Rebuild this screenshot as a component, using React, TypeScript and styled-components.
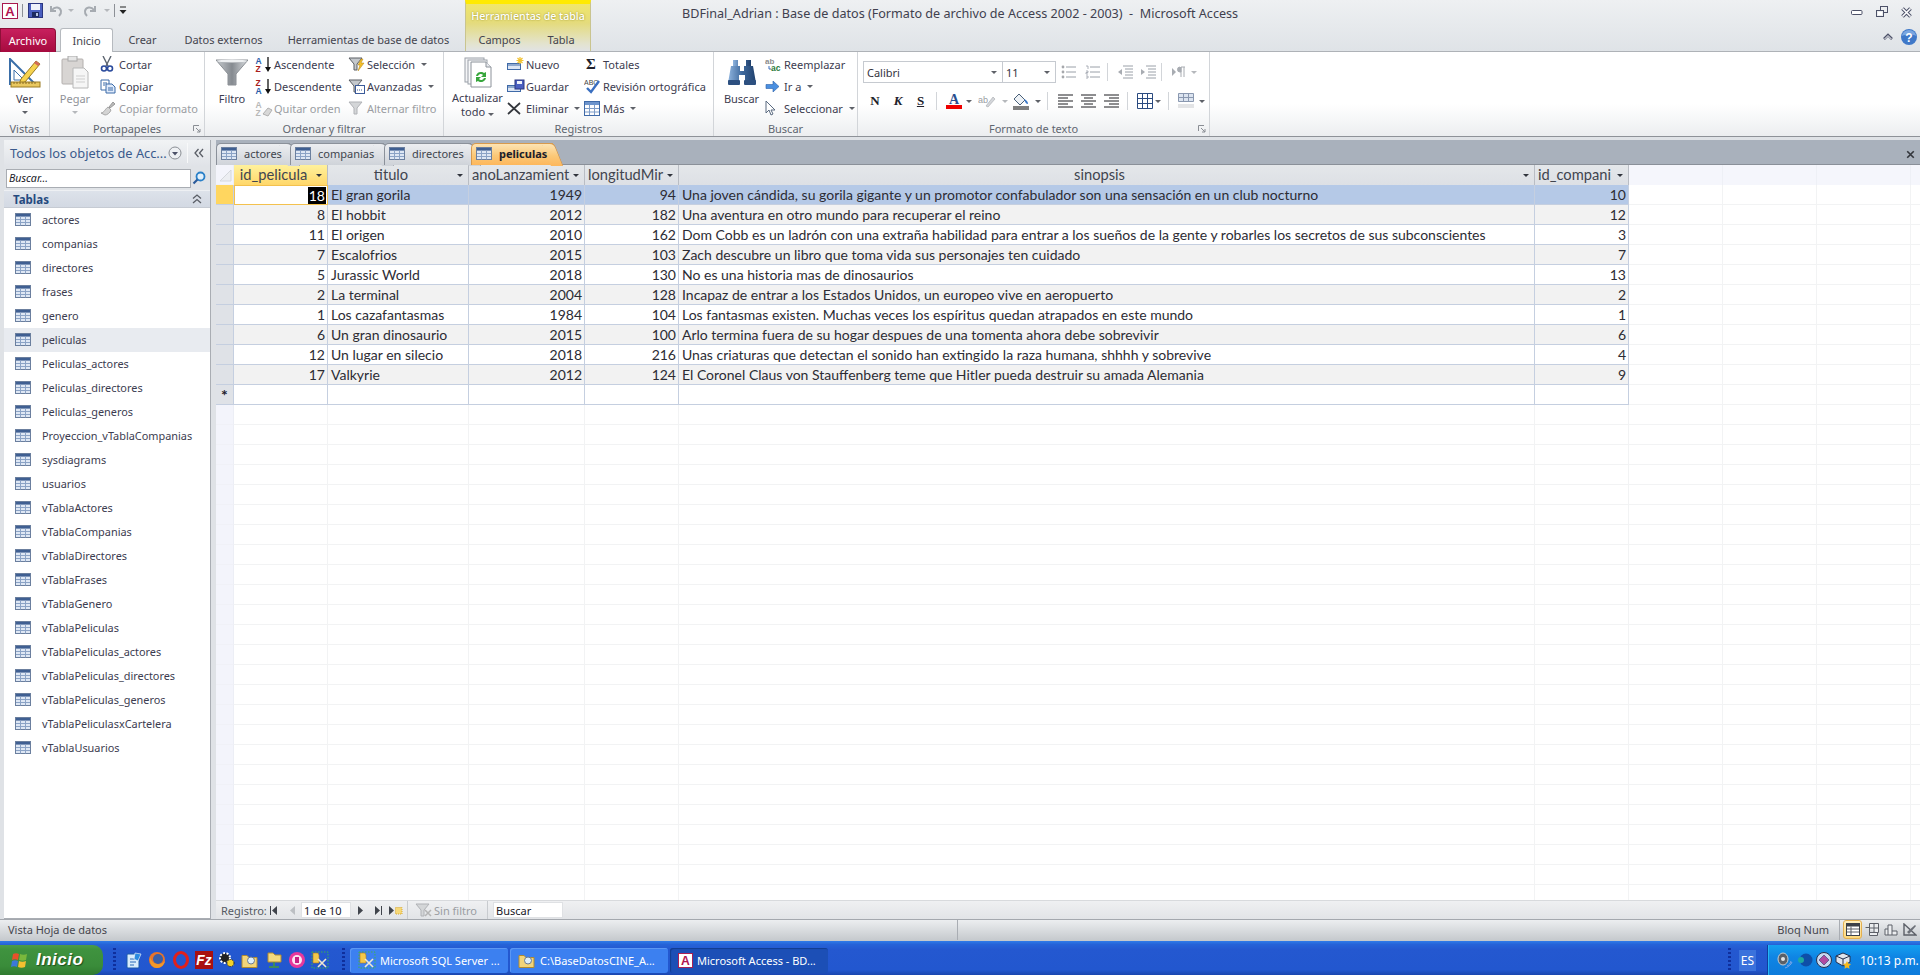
import React, { FC, ReactNode } from "react";
import styled, { createGlobalStyle } from "styled-components";

const UI_FONT = `"Noto Sans", "Open Sans", sans-serif`;
const DATA_FONT = `Lato, "Noto Sans", sans-serif`;

const GlobalStyle = createGlobalStyle`
  html, body {
    margin: 0;
    padding: 0;
    height: 100%;
    overflow: hidden;
  }
  #root {
    height: 100%;
  }
  * {
    box-sizing: border-box;
  }
`;

const Page = styled.div`
  width: 1920px;
  height: 975px;
  display: flex;
  flex-direction: column;
  font-family: ${UI_FONT};
  font-size: 11px;
  color: #3c3c50;
  background: #fff;
  overflow: hidden;
`;

/* ---------- title area ---------- */

const TopArea = styled.div`
  height: 52px;
  display: flex;
  background: linear-gradient(#eef0f2, #dfe3e7);
  border-bottom: 1px solid #aeb2b7;
  flex-shrink: 0;
`;

const TopLeft = styled.div`
  width: 465px;
  display: flex;
  flex-direction: column;
`;

const QatRow = styled.div`
  height: 27px;
  display: flex;
  align-items: center;
  padding: 0 0 5px 2px;
`;

const QatSlot = styled.span<{ $w: number }>`
  width: ${(p) => p.$w}px;
  height: 20px;
  display: flex;
  align-items: center;
  justify-content: center;
`;

const QatSep = styled.span`
  width: 1px;
  height: 13px;
  margin: 0 4px;
  background: #8c9096;
`;

const TabRow = styled.div`
  height: 25px;
  display: flex;
  align-items: flex-end;
`;

const FileTab = styled.div`
  width: 56px;
  height: 24px;
  margin-right: 4px;
  margin-bottom: -1px;
  display: flex;
  align-items: center;
  justify-content: center;
  color: #fff;
  background: linear-gradient(#c8205e, #a50a3e);
  border: 1px solid #8d1038;
  border-bottom: none;
  border-radius: 0 4px 0 0;
`;

const RibbonTab = styled.div<{ $w: number; $active?: boolean }>`
  width: ${(p) => p.$w}px;
  height: ${(p) => (p.$active ? 24 : 23)}px;
  margin-bottom: ${(p) => (p.$active ? -1 : 0)}px;
  display: flex;
  align-items: center;
  justify-content: center;
  color: #44444e;
  background: ${(p) => (p.$active ? "#fff" : "transparent")};
  border: ${(p) => (p.$active ? "1px solid #b6babf" : "none")};
  border-bottom: none;
  border-radius: 3px 3px 0 0;
`;

const ContextColumn = styled.div`
  width: 126px;
  display: flex;
  flex-direction: column;
  background: linear-gradient(#f0e66a 0%, #e4db7c 40%, #e3e3cf 85%, #e1e3e4 100%);
  border-top: 4px solid #ffea00;
  border-left: 1px solid #c9c48f;
  border-right: 1px solid #c9c48f;
`;

const ContextLabel = styled.div`
  height: 23px;
  display: flex;
  align-items: center;
  justify-content: center;
  padding-top: 2px;
  color: #fff;
  font-size: 10.6px;
  font-weight: 500;
  text-shadow: 0 0 2px #8f8720;
  white-space: nowrap;
`;

const TopRight = styled.div`
  flex: 1;
  display: flex;
  flex-direction: column;
`;

const TitleRow = styled.div`
  height: 27px;
  display: flex;
  align-items: center;
  padding: 1px 8px 0 91px;
  color: #40404e;
  font-size: 12.6px;
  white-space: pre;
`;

const TitleText = styled.span`
  flex: 1;
`;

const WindowButtons = styled.div`
  display: flex;
  gap: 13px;
  align-items: center;
  margin-bottom: 3px;
`;

const HelpRow = styled.div`
  height: 25px;
  display: flex;
  align-items: center;
  justify-content: flex-end;
  gap: 8px;
  padding: 0 3px 3px 0;
`;

/* ---------- ribbon ---------- */

const Ribbon = styled.div`
  height: 85px;
  display: flex;
  background: linear-gradient(#fff 0%, #fff 62%, #eceef0 100%);
  border-bottom: 1px solid #8e9298;
  flex-shrink: 0;
`;

const GroupBox = styled.div<{ $w: number }>`
  position: relative;
  width: ${(p) => p.$w}px;
  display: flex;
  flex-direction: column;
  border-right: 1px solid #d2d5d9;
`;

const GroupBody = styled.div<{ $pad: number }>`
  height: 68px;
  display: flex;
  padding-left: ${(p) => p.$pad}px;
  padding-top: 1px;
`;

const GroupLabel = styled.div`
  height: 16px;
  display: flex;
  align-items: center;
  justify-content: center;
  color: #5f6670;
`;

const Launcher = styled.span`
  position: absolute;
  right: 3px;
  bottom: 3px;
  display: flex;
`;

const LargeButton = styled.div<{ $w: number; $off?: boolean }>`
  width: ${(p) => p.$w}px;
  display: flex;
  flex-direction: column;
  align-items: center;
  color: ${(p) => (p.$off ? "#8f9298" : "#3c3c50")};
  line-height: 14px;
  text-align: center;
  white-space: nowrap;
`;

const LargeIcon = styled.div<{ $h?: number }>`
  height: ${(p) => p.$h ?? 39}px;
  display: flex;
  align-items: center;
  justify-content: center;
`;

const Caret = styled.span<{ $off?: boolean }>`
  display: inline-block;
  width: 0;
  height: 0;
  border-left: 3px solid transparent;
  border-right: 3px solid transparent;
  border-top: 3px solid ${(p) => (p.$off ? "#b5b8bc" : "#5e6168")};
`;

const LargeCaret = styled(Caret)`
  margin-top: 5px;
`;

const SmallColumn = styled.div<{ $w?: number }>`
  width: ${(p) => (p.$w ? `${p.$w}px` : "auto")};
  display: flex;
  flex-direction: column;
`;

const SmallButton = styled.div<{ $off?: boolean }>`
  height: 22px;
  display: flex;
  align-items: center;
  color: ${(p) => (p.$off ? "#9a9da2" : "#3c3c50")};
  white-space: nowrap;
`;

const SmallIcon = styled.span`
  width: 19px;
  height: 18px;
  display: flex;
  align-items: center;
  flex-shrink: 0;
`;

const SmallCaret = styled(Caret)`
  margin-left: 6px;
`;

const SigmaGlyph = styled.span`
  padding-left: 2px;
  font-family: "Liberation Serif", serif;
  font-size: 15px;
  font-weight: 700;
  color: #20202a;
`;

const FormatBody = styled.div`
  height: 68px;
  display: flex;
  flex-direction: column;
  padding: 9px 0 0 5px;
`;

const FormatRow = styled.div<{ $gap?: number }>`
  height: 22px;
  display: flex;
  align-items: center;
  margin-bottom: ${(p) => p.$gap ?? 0}px;
`;

const Combo = styled.div<{ $w: number }>`
  width: ${(p) => p.$w}px;
  height: 22px;
  display: flex;
  align-items: center;
  justify-content: space-between;
  padding: 0 5px 0 3px;
  margin-right: -1px;
  background: #fff;
  border: 1px solid #c6cad0;
  color: #33333d;
`;

const FormatSlot = styled.span<{ $w: number }>`
  width: ${(p) => p.$w}px;
  height: 22px;
  display: flex;
  align-items: center;
  justify-content: center;
  flex-shrink: 0;
`;

const BoldLetter = styled.span<{ $italic?: boolean; $under?: boolean }>`
  font-family: "Liberation Serif", serif;
  font-size: 13px;
  font-weight: 700;
  color: #20202a;
  font-style: ${(p) => (p.$italic ? "italic" : "normal")};
  text-decoration: ${(p) => (p.$under ? "underline" : "none")};
`;

const FormatSep = styled.span<{ $l: number; $r: number }>`
  width: 1px;
  height: 18px;
  margin: 0 ${(p) => p.$r}px 0 ${(p) => p.$l}px;
  background: #d2d5d9;
  flex-shrink: 0;
`;

/* ---------- main body ---------- */

const Workspace = styled.div`
  flex: 1;
  min-height: 0;
  display: flex;
  background: #dfe2e6;
  padding-top: 3px;
`;

const NavPane = styled.div`
  width: 206px;
  margin-left: 4px;
  display: flex;
  flex-direction: column;
  background: #fff;
  border-bottom: 1px solid #a9adb3;
`;

const NavHeader = styled.div`
  height: 26px;
  flex-shrink: 0;
  display: flex;
  align-items: center;
  padding: 0 6px;
  background: linear-gradient(#f1f3f5, #e0e3e8);
  color: #3a5a8c;
  font-size: 12.8px;
  white-space: nowrap;
`;

const NavTitle = styled.span`
  flex: 1;
`;

const NavSep = styled.span`
  width: 1px;
  height: 20px;
  margin: 0 6px 0 5px;
  background: #f8f9fa;
`;

const NavSearch = styled.div`
  height: 24px;
  flex-shrink: 0;
  display: flex;
  align-items: center;
  background: #e0e3e7;
  padding: 1px 4px 1px 2px;
`;

const NavInput = styled.div`
  width: 185px;
  height: 19px;
  display: flex;
  align-items: center;
  padding-left: 2px;
  background: #fff;
  border: 1px solid #a9adb3;
  color: #202028;
  font-size: 10.6px;
  font-style: italic;
`;

const NavSearchIcon = styled.span`
  flex: 1;
  display: flex;
  justify-content: center;
`;

const NavGroup = styled.div`
  height: 18px;
  flex-shrink: 0;
  display: flex;
  align-items: center;
  justify-content: space-between;
  padding: 0 8px 0 9px;
  background: linear-gradient(#dde2ea, #d3d9e3);
  border-top: 1px solid #eef0f3;
  border-bottom: 1px solid #c6cbd3;
  color: #254a7f;
  font-size: 11.5px;
  font-weight: 700;
`;

const NavList = styled.div`
  flex: 1;
  display: flex;
  flex-direction: column;
`;

const NavItem = styled.div<{ $active?: boolean }>`
  height: 24px;
  flex-shrink: 0;
  display: flex;
  align-items: center;
  gap: 11px;
  padding: 0 0 1px 11px;
  background: ${(p) => (p.$active ? "#e8ebf0" : "transparent")};
  color: #3c3c50;
  font-size: 10.9px;
  white-space: nowrap;
`;

const Gutter = styled.div`
  width: 6px;
  border-left: 1px solid #a9adb3;
`;

const DocArea = styled.div`
  flex: 1;
  min-width: 0;
  display: flex;
  flex-direction: column;
`;

const DocTabs = styled.div`
  height: 25px;
  display: flex;
  align-items: flex-end;
  background: #a9b1bc;
  border-bottom: 1px solid #8a9099;
  flex-shrink: 0;
`;

const DocTab = styled.div<{ $w: number; $active?: boolean }>`
  position: relative;
  width: ${(p) => p.$w}px;
  height: 22px;
  margin-bottom: -1px;
  display: flex;
  align-items: center;
  gap: 7px;
  padding: 0 0 2px 4px;
  font-size: 11px;
  font-weight: ${(p) => (p.$active ? 700 : 400)};
  color: ${(p) => (p.$active ? "#20202a" : "#41454d")};
  background: ${(p) =>
    p.$active
      ? "linear-gradient(#fde4b4, #fbc877 55%, #fdb75c)"
      : "linear-gradient(#eceef1, #cfd3d9)"};
  border: 1px solid ${(p) => (p.$active ? "#d79a4e" : "#8b919a")};
  border-right: none;
  border-bottom: none;
  border-radius: 5px 0 0 0;
  z-index: ${(p) => (p.$active ? 2 : 1)};

  &::after {
    content: "";
    position: absolute;
    top: -1px;
    right: -6px;
    width: 12px;
    height: 22px;
    background: inherit;
    border: 1px solid ${(p) => (p.$active ? "#d79a4e" : "#8b919a")};
    border-left: none;
    border-bottom: none;
    border-radius: 0 5px 0 0;
    transform: skewX(22deg);
    z-index: -1;
  }
`;

const DocClose = styled.span`
  margin-left: auto;
  margin-right: 5px;
  margin-bottom: 5px;
  display: flex;
`;

const GridBody = styled.div`
  flex: 1;
  min-height: 0;
  display: flex;
  flex-direction: column;
  overflow: hidden;
  background: #fff;
`;

const GridRow = styled.div`
  height: 20px;
  display: flex;
  flex-shrink: 0;
`;

const HeaderCell = styled.div<{ $w: number; $active?: boolean; $blank?: boolean }>`
  position: relative;
  width: ${(p) => p.$w}px;
  flex-shrink: 0;
  display: flex;
  align-items: center;
  justify-content: center;
  padding: 0 14px 2px 0;
  overflow: hidden;
  font-family: ${DATA_FONT};
  font-size: 14.7px;
  color: #41454f;
  white-space: nowrap;
  background: ${(p) =>
    p.$blank
      ? "#f5f6fc"
      : p.$active
        ? "linear-gradient(#fff19c, #ffd76a)"
        : "linear-gradient(#e4e7ea, #dde0e5)"};
  border-right: 1px solid ${(p) => (p.$blank ? "#eef0f6" : "#b9bdc4")};
`;

const HeaderLabel = styled.span<{ $left?: boolean }>`
  flex: ${(p) => (p.$left ? 1 : "none")};
  min-width: 0;
  padding-left: ${(p) => (p.$left ? 3 : 0)}px;
`;

const HeaderCaret = styled(Caret)`
  position: absolute;
  right: 5px;
  top: 9px;
  border-top-color: #30343c;
`;

const Selector = styled.div<{ $state: "blank" | "plain" | "current" }>`
  width: 18px;
  flex-shrink: 0;
  display: flex;
  align-items: center;
  justify-content: center;
  color: #20202a;
  font-family: ${DATA_FONT};
  font-size: 16px;
  font-weight: 700;
  background: ${(p) =>
    p.$state === "current" ? "#ffd65f" : p.$state === "plain" ? "#dfe2e7" : "#f3f4fb"};
  border-bottom: 1px solid ${(p) => (p.$state === "blank" ? "#f0f1f7" : "#c5cfe0")};
  border-right: 1px solid ${(p) => (p.$state === "blank" ? "#eceef5" : "#c5cfe0")};
`;

const Cell = styled.div<{ $w: number; $num?: boolean; $bg: string; $faint?: boolean }>`
  width: ${(p) => p.$w}px;
  flex-shrink: 0;
  display: flex;
  align-items: center;
  justify-content: ${(p) => (p.$num ? "flex-end" : "flex-start")};
  padding: 0 2px 0 3px;
  overflow: hidden;
  font-family: ${DATA_FONT};
  font-size: 14px;
  color: #2c2c34;
  white-space: nowrap;
  background: ${(p) => p.$bg};
  border-right: 1px solid ${(p) => (p.$faint ? "#f2f3f4" : "#c5cfe0")};
  border-bottom: 1px solid ${(p) => (p.$faint ? "#f2f3f4" : "#c5cfe0")};
`;

const CurrentCell = styled(Cell)`
  padding-right: 1px;
  border: 1px solid #f3c14e;
`;

const Inverted = styled.span`
  padding: 0 1px;
  background: #000;
  color: #fff;
`;

const RecordBar = styled.div`
  height: 19px;
  display: flex;
  align-items: center;
  background: linear-gradient(#eff0f2, #e2e4e7);
  border-top: 1px solid #d8dadd;
  color: #555a62;
  flex-shrink: 0;
`;

const RecordLabel = styled.span`
  width: 50px;
  padding-left: 5px;
`;

const RecordGlyph = styled.span<{ $w: number }>`
  width: ${(p) => p.$w}px;
  display: flex;
  justify-content: center;
  flex-shrink: 0;
`;

const RecordInput = styled.div<{ $w: number }>`
  width: ${(p) => p.$w}px;
  height: 16px;
  display: flex;
  align-items: center;
  padding-left: 2px;
  background: #fff;
  border: 1px solid #dfe1e4;
  color: #202028;
  flex-shrink: 0;
`;

const RecordSep = styled.span<{ $l: number; $r: number }>`
  width: 1px;
  height: 19px;
  margin: 0 ${(p) => p.$r}px 0 ${(p) => p.$l}px;
  background: #c8cbcf;
`;

const RecordOff = styled.span`
  color: #9a9da2;
  width: 45px;
`;

/* ---------- status bar ---------- */

const StatusBar = styled.div`
  height: 22px;
  flex-shrink: 0;
  display: flex;
  align-items: center;
  padding: 0 0 2px 8px;
  background: linear-gradient(#eceef0, #c4c8cc);
  border-top: 1px solid #a4a8ae;
  color: #45464e;
`;

const StatusText = styled.span<{ $w: number }>`
  width: ${(p) => p.$w}px;
  white-space: nowrap;
`;

const StatusSep = styled.span`
  width: 1px;
  height: 20px;
  background: #a9adb3;
`;

const StatusKey = styled.span`
  margin-left: auto;
  margin-right: 10px;
`;

const ViewButton = styled.span<{ $active?: boolean }>`
  width: 19px;
  height: 19px;
  display: flex;
  align-items: center;
  justify-content: center;
  border: 1px solid ${(p) => (p.$active ? "#e4b050" : "transparent")};
  border-radius: 3px;
  background: ${(p) => (p.$active ? "linear-gradient(#fff0c0, #fcd77c)" : "transparent")};
`;

const ViewGroup = styled.div`
  display: flex;
  margin: 0 1px 0 3px;
`;

/* ---------- taskbar ---------- */

const Taskbar = styled.div`
  height: 34px;
  flex-shrink: 0;
  display: flex;
  align-items: stretch;
  padding-top: 4px;
  color: #fff;
  background: linear-gradient(#2f7ce8 0, #2663d8 10%, #2458d0 25%, #2257cf 85%, #1a46ae 100%);
`;

const StartButton = styled.div`
  width: 103px;
  display: flex;
  align-items: center;
  gap: 6px;
  padding-left: 11px;
  font-family: "Liberation Sans", sans-serif;
  font-size: 17px;
  font-weight: 700;
  font-style: italic;
  letter-spacing: 0.5px;
  text-shadow: 1px 1px 1px #1c4d1c;
  background: linear-gradient(#4b9b4b 0, #3f933f 15%, #3a8c3a 70%, #2f7a2f 100%);
  border-radius: 0 10px 10px 0;
`;

const Grip = styled.span<{ $l: number; $r: number }>`
  width: 3px;
  margin: 3px ${(p) => p.$r}px 3px ${(p) => p.$l}px;
  background: repeating-linear-gradient(#0f2f9c 0 2px, transparent 2px 4px);
`;

const QuickIcons = styled.div`
  display: flex;
  align-items: center;
  gap: 5.3px;
  width: 213px;
`;

const TaskButton = styled.div<{ $active?: boolean }>`
  width: 158px;
  height: 25px;
  align-self: center;
  margin-right: 2px;
  display: flex;
  align-items: center;
  gap: 4px;
  padding-left: 8px;
  font-size: 11px;
  white-space: nowrap;
  background: ${(p) => (p.$active ? "#1c4fb6" : "#3c80f0")};
  border-radius: 3px;
  box-shadow: ${(p) => (p.$active ? "inset 1px 1px 1px #123c90" : "inset 1px 1px 0 #5b97f4")};
`;

const TaskSpacer = styled.span`
  flex: 1;
`;

const Language = styled.span`
  padding: 2px 2px;
  align-self: center;
  background: #3a72dc;
  font-size: 12px;
`;

const Tray = styled.div`
  width: 153px;
  margin-left: 11px;
  display: flex;
  align-items: center;
  gap: 3px;
  padding-left: 9px;
  background: linear-gradient(#14a0f0, #0f85e4 40%, #0d7bdb);
  border-left: 1px solid #0f3e9e;
  box-shadow: inset 1px 0 0 #25b5f5;
  font-size: 12px;
  white-space: nowrap;
`;

const Clock = styled.span`
  margin-left: 5px;
`;

/* ---------- icons ---------- */

const AccessIcon: FC<{ s?: number }> = ({ s = 16 }) => (
  <svg width={s} height={s} viewBox="0 0 16 16">
    <rect x="0.5" y="0.5" width="15" height="15" fill="#fff" stroke="#a8184e" />
    <text x="8" y="13" textAnchor="middle" fontFamily="Liberation Sans" fontWeight="700" fontSize="13" fill="#b01450">
      A
    </text>
  </svg>
);

const SaveIcon: FC = () => (
  <svg width="15" height="15" viewBox="0 0 15 15">
    <rect x="0.5" y="0.5" width="14" height="14" fill="#4a5fc0" stroke="#2a3680" />
    <rect x="3" y="1" width="9" height="6" fill="#eef2fa" />
    <rect x="4" y="9" width="7" height="5" fill="#1c2a60" />
    <rect x="8" y="10" width="2" height="3" fill="#b6c4e4" />
  </svg>
);

const UndoIcon: FC<{ flip?: boolean }> = ({ flip }) => (
  <svg width="13" height="13" viewBox="0 0 13 13" style={flip ? { transform: "scaleX(-1)" } : undefined}>
    <path d="M1 2v5h5M2 6c3-4 8-3 9 1 .4 2-1 4-2 5" fill="none" stroke="#a6abb1" strokeWidth="2" />
  </svg>
);

const QatMore: FC = () => (
  <svg width="8" height="10" viewBox="0 0 8 10">
    <path d="M1 1h6" stroke="#222" />
    <path d="M0.5 4h7L4 8z" fill="#222" />
  </svg>
);

const MinIcon: FC = () => (
  <svg width="12" height="8" viewBox="0 0 12 8">
    <rect x="0.5" y="2.5" width="10.5" height="4" rx="1" fill="#fff" stroke="#4c5168" />
  </svg>
);

const RestoreIcon: FC = () => (
  <svg width="12" height="12" viewBox="0 0 12 12">
    <rect x="4.5" y="0.5" width="7" height="6" fill="none" stroke="#4c5168" />
    <rect x="0.5" y="4.5" width="7" height="6" fill="#eceef0" stroke="#4c5168" />
    <rect x="2" y="6" width="4" height="3" fill="#fff" />
  </svg>
);

const CloseIcon: FC<{ s?: number; thin?: boolean }> = ({ s = 11, thin }) => (
  <svg width={s} height={s} viewBox="0 0 11 11">
    {!thin && <path d="M1.5 1.5l8 8M9.5 1.5l-8 8" stroke="#4c5168" strokeWidth="3.6" />}
    <path d="M1.5 1.5l8 8M9.5 1.5l-8 8" stroke={thin ? "#33363c" : "#fff"} strokeWidth={thin ? 2 : 1.6} />
  </svg>
);

const ChevronUp: FC = () => (
  <svg width="10" height="8" viewBox="0 0 10 8">
    <path d="M1 6l4-4 4 4" fill="none" stroke="#4c5168" strokeWidth="2.6" />
    <path d="M1.6 6L5 2.6 8.4 6" fill="none" stroke="#fff" strokeWidth="1" />
  </svg>
);

const HelpIcon: FC = () => (
  <svg width="16" height="16" viewBox="0 0 16 16">
    <circle cx="8" cy="8" r="8" fill="#3f78c8" />
    <path d="M1 7a7 6 0 0 1 14 0c-3-2-10-2-14 0z" fill="#7aa6e0" />
    <text x="8" y="12.5" textAnchor="middle" fontFamily="Liberation Sans" fontWeight="700" fontSize="12" fill="#fff">
      ?
    </text>
  </svg>
);

const VerIcon: FC = () => (
  <svg width="32" height="30" viewBox="0 0 32 30">
    <path d="M1 1v25h25z" fill="none" stroke="#3a6ea8" strokeWidth="2" />
    <path d="M5 12v10h10z" fill="none" stroke="#3a6ea8" />
    <path d="M12 21L27 3l4 3-15 18-6 2z" fill="#f5d24f" stroke="#9a7a20" />
    <path d="M27 3l4 3-2 2-4-3z" fill="#d26a5a" />
    <rect x="2" y="24" width="29" height="5" fill="#e9c860" stroke="#9a7a20" />
    <path d="M5 24v2M8 24v2M11 24v2M14 24v2M17 24v2M20 24v2M23 24v2M26 24v2" stroke="#8a6a20" />
  </svg>
);

const PasteIcon: FC = () => (
  <svg width="28" height="33" viewBox="0 0 28 33">
    <rect x="1" y="3" width="21" height="25" rx="1" fill="#d8d5d3" stroke="#b4b0ae" />
    <rect x="7" y="0" width="9" height="5" fill="#e6e6e6" stroke="#a8a8a8" />
    <path d="M12 12h11l4 4v16H12z" fill="#f6f6f6" stroke="#b8b8b8" />
    <path d="M15 20h9M15 23h9M15 26h9" stroke="#cfcfcf" />
  </svg>
);

const ScissorsIcon: FC = () => (
  <svg width="14" height="16" viewBox="0 0 14 16">
    <path d="M3 0l5 10M11 0L6 10" stroke="#5d6570" strokeWidth="1.4" />
    <circle cx="4" cy="12.5" r="2.5" fill="none" stroke="#2a4a9c" strokeWidth="1.6" />
    <circle cx="10" cy="12.5" r="2.5" fill="none" stroke="#2a4a9c" strokeWidth="1.6" />
  </svg>
);

const CopyIcon: FC = () => (
  <svg width="16" height="15" viewBox="0 0 16 15">
    <path d="M1 1h8v10H1z" fill="#fff" stroke="#3a6aa8" />
    <path d="M6 5h6l3 3v6H6z" fill="#dfeafa" stroke="#3a6aa8" />
    <path d="M3 4h4M3 6h2M8 9h5M8 11h5" stroke="#3a6aa8" />
  </svg>
);

const BrushIcon: FC = () => (
  <svg width="16" height="15" viewBox="0 0 16 15">
    <path d="M9 6l4-5 2 2-5 4z" fill="#bbb" stroke="#9a9a9a" />
    <path d="M1 12c3 0 4-4 7-6l3 3c-1 3-4 5-6 5z" fill="#d4d4d4" stroke="#a8a8a8" />
  </svg>
);

const FunnelIcon: FC = () => (
  <svg width="32" height="27" viewBox="0 0 32 27">
    <defs>
      <linearGradient id="fn" x1="0" x2="1">
        <stop offset="0" stopColor="#c8ccd0" />
        <stop offset="0.5" stopColor="#858a90" />
        <stop offset="1" stopColor="#dadde0" />
      </linearGradient>
    </defs>
    <path d="M0 1h32L20 15v11h-8V15z" fill="url(#fn)" stroke="#8a8e94" />
    <ellipse cx="16" cy="2" rx="15" ry="1.4" fill="#eef0f2" />
  </svg>
);

const SortIcon: FC<{ down?: boolean; off?: boolean }> = ({ down, off }) => (
  <svg width="18" height="17" viewBox="0 0 18 17">
    <text x="0.5" y="7.5" fontFamily="Liberation Sans" fontWeight="700" fontSize="8.5" fill={off ? "#b8b8b8" : down ? "#a82020" : "#2a5aa8"}>
      {down ? "Z" : "A"}
    </text>
    <text x="0.5" y="16" fontFamily="Liberation Sans" fontWeight="700" fontSize="8.5" fill={off ? "#b8b8b8" : down ? "#2a5aa8" : "#a82020"}>
      {down ? "A" : "Z"}
    </text>
    {off ? (
      <path d="M8 14l5-6 4 2-4 6z" fill="#d8d8d8" stroke="#b0b0b0" />
    ) : (
      <>
        <path d="M13 1v12" stroke="#111" strokeWidth="1.3" />
        <path d="M10 11h6l-3 5z" fill="#111" />
      </>
    )}
  </svg>
);

const FilterSmall: FC<{ kind: "bolt" | "form" | "off" | "clear" }> = ({ kind }) => (
  <svg width="17" height="15" viewBox="0 0 17 15">
    <path
      d="M1 1h13L9 7v6H6V7z"
      fill={kind === "off" || kind === "clear" ? "#d4d6d8" : "#c4c8cc"}
      stroke={kind === "off" || kind === "clear" ? "#b0b2b6" : "#5a5e64"}
    />
    {kind === "bolt" && <path d="M13 2l-3 6h2l-2 6 6-8h-3l2-4z" fill="#f5c02a" stroke="#b08010" strokeWidth="0.5" />}
    {kind === "form" && (
      <>
        <rect x="7.5" y="6.5" width="9" height="8" fill="#fff" stroke="#3a5a9a" />
        <path d="M9 11h1M11 11h1M13 11h1" stroke="#3a5a9a" />
      </>
    )}
    {kind === "clear" && <path d="M10 7l6 6M16 7l-6 6" stroke="#b4b4b4" strokeWidth="1.5" />}
  </svg>
);

const RefreshIcon: FC = () => (
  <svg width="28" height="31" viewBox="0 0 28 31">
    <rect x="1" y="1" width="19" height="24" fill="#f4f5f7" stroke="#9aa0a8" />
    <rect x="4" y="3" width="19" height="24" fill="#f8f9fa" stroke="#9aa0a8" />
    <path d="M7 5h15l5 5v20H7z" fill="#fff" stroke="#8c929a" />
    <path d="M22 5v5h5" fill="#e8eaee" stroke="#8c929a" />
    <path d="M12 19a5 5 0 0 1 8-3l2-1v5h-5l2-2a3 3 0 0 0-5 1z" fill="#37a63c" />
    <path d="M22 21a5 5 0 0 1-8 3l-2 1v-5h5l-2 2a3 3 0 0 0 5-1z" fill="#37a63c" />
  </svg>
);

const NewRecordIcon: FC<{ save?: boolean }> = ({ save }) => (
  <svg width="18" height="14" viewBox="0 0 18 14">
    <rect x="0.5" y="6.5" width="13" height="6" fill="#dde6f4" stroke="#3f6aa8" />
    <path d="M1 8h12" stroke="#3f6aa8" />
    {save ? (
      <>
        <rect x="8" y="1" width="9" height="9" fill="#4a5fc0" stroke="#2a3680" />
        <rect x="10" y="2" width="5" height="3" fill="#eef2fa" />
      </>
    ) : (
      <path d="M13 0v7M9.5 3.5h7M10.5 1l5 5M15.5 1l-5 5" stroke="#f2c230" strokeWidth="1.2" />
    )}
  </svg>
);

const DeleteIcon: FC = () => (
  <svg width="15" height="13" viewBox="0 0 15 13">
    <path d="M1 1l12 11M13 1L1 12" stroke="#33363c" strokeWidth="1.7" />
  </svg>
);

const SpellIcon: FC = () => (
  <svg width="17" height="16" viewBox="0 0 17 16">
    <text x="0" y="7" fontFamily="Liberation Sans" fontSize="7" fill="#444">
      ABC
    </text>
    <path d="M3 10l4 4 8-11" fill="none" stroke="#3a6fc0" strokeWidth="2.4" />
  </svg>
);

const TableIcon: FC<{ w?: number; h?: number }> = ({ w = 16, h = 13 }) => (
  <svg width={w} height={h} viewBox="0 0 16 13">
    <rect x="0.5" y="0.5" width="15" height="12" fill="#dee7f4" stroke="#6b7f9e" />
    <rect x="1" y="1" width="14" height="2.6" fill="#3f5f92" />
    <path d="M1 6.5h14M1 9.5h14M5.5 3.5v9M10.5 3.5v9" stroke="#8ba3c6" />
  </svg>
);

const MoreGrid: FC = () => (
  <svg width="16" height="15" viewBox="0 0 16 15">
    <rect x="0.5" y="0.5" width="15" height="14" fill="#fdfdfe" stroke="#3f6aa8" />
    <rect x="1" y="1" width="14" height="3" fill="#6d94cc" />
    <path d="M1 7.5h14M1 11h14M5.5 4v10M10.5 4v10" stroke="#7d9cc8" />
  </svg>
);

const Binoculars: FC = () => (
  <svg width="28" height="27" viewBox="0 0 28 27">
    <defs>
      <linearGradient id="bn" x1="0" x2="1">
        <stop offset="0" stopColor="#8fb4de" />
        <stop offset="0.5" stopColor="#3f6a9e" />
        <stop offset="1" stopColor="#20406c" />
      </linearGradient>
    </defs>
    <path d="M5 1h5v6H5zM18 1h5v6h-5z" fill="url(#bn)" />
    <path d="M3 7h9v5h4V7h9l3 17h-11v-8h-6v8H0z" fill="url(#bn)" />
    <rect x="0" y="21" width="12" height="5" rx="1" fill="#2d5080" />
    <rect x="16" y="21" width="12" height="5" rx="1" fill="#2d5080" />
  </svg>
);

const ReplaceIcon: FC = () => (
  <svg width="17" height="15" viewBox="0 0 17 15">
    <text x="0" y="6.5" fontFamily="Liberation Sans" fontSize="8" fontWeight="700" fill="#8c8c8c">
      ab
    </text>
    <text x="6" y="14" fontFamily="Liberation Sans" fontSize="8.5" fontWeight="700" fill="#2a7a38">
      ac
    </text>
    <path d="M4 9v3h2" fill="none" stroke="#3a6fc0" />
  </svg>
);

const GotoIcon: FC = () => (
  <svg width="15" height="11" viewBox="0 0 15 11">
    <path d="M1 3.5h7V0l6 5.5L8 11V7.5H1z" fill="#4a8fe0" stroke="#2a60a8" strokeWidth="0.6" />
  </svg>
);

const PointerIcon: FC = () => (
  <svg width="12" height="16" viewBox="0 0 12 16">
    <path d="M1 1v12l3-3 2 5 2-1-2-4h4z" fill="#fff" stroke="#5a6a80" />
  </svg>
);

const DialogLauncher: FC = () => (
  <svg width="8" height="8" viewBox="0 0 8 8">
    <path d="M.5 6V.5H6" fill="none" stroke="#8a8e94" />
    <path d="M3 3l4 4M7 4v3H4" fill="none" stroke="#8a8e94" />
  </svg>
);

const ListIcon: FC<{ numbered?: boolean }> = ({ numbered }) => (
  <svg width="15" height="14" viewBox="0 0 15 14">
    <path d="M5 2h10M5 7h10M5 12h10" stroke="#9aa0a8" />
    {numbered ? (
      <path d="M1 1h2v3M1 6h2v1.5H1V9h2M1 11h2v2H1" fill="none" stroke="#9aa0a8" strokeWidth="0.8" />
    ) : (
      <>
        <circle cx="2" cy="2" r="1.4" fill="#a6a8ac" />
        <circle cx="2" cy="7" r="1.4" fill="#a6a8ac" />
        <circle cx="2" cy="12" r="1.4" fill="#a6a8ac" />
      </>
    )}
  </svg>
);

const IndentIcon: FC<{ out?: boolean }> = ({ out }) => (
  <svg width="16" height="14" viewBox="0 0 16 14">
    <path d="M6 1h10M8 4h8M8 7h8M8 10h8M6 13h10" stroke="#9aa0a8" />
    <path d={out ? "M5 4v6L1 7z" : "M1 4v6l4-3z"} fill="#a8acb2" />
  </svg>
);

const ParagraphIcon: FC = () => (
  <svg width="14" height="12" viewBox="0 0 14 12">
    <path d="M0 2v8l4-4z" fill="#a8acb2" />
    <path d="M9 1h4M8 1a2.500 2.500 0 0 0 0 5h1V1M9 1v10M12 1v10" fill="#a8acb2" stroke="#a8acb2" />
  </svg>
);

const FontColorIcon: FC = () => (
  <svg width="16" height="16" viewBox="0 0 16 16">
    <text x="8" y="11" textAnchor="middle" fontFamily="Liberation Serif" fontWeight="700" fontSize="14" fill="#2a4f90">
      A
    </text>
    <rect x="0" y="12" width="16" height="4" fill="#ee0000" />
  </svg>
);

const HighlightIcon: FC = () => (
  <svg width="18" height="15" viewBox="0 0 18 15">
    <text x="0" y="9" fontFamily="Liberation Sans" fontSize="9" fill="#9a9da2">
      ab
    </text>
    <path d="M8 12l7-9 2 2-7 8z" fill="#d4d6da" stroke="#a4a8ac" strokeWidth="0.6" />
  </svg>
);

const FillIcon: FC = () => (
  <svg width="16" height="17" viewBox="0 0 16 17">
    <path d="M6 1l6 6-5 5-6-6z" fill="#eef2f6" stroke="#4a6078" />
    <path d="M11 6c3 1 4 3 4 5-2 0-3-2-4-5z" fill="#3a78c8" />
    <rect x="0" y="13" width="16" height="4" fill="#7f7f7f" />
  </svg>
);

const AlignIcon: FC<{ mode: "l" | "c" | "r" }> = ({ mode }) => {
  const d = {
    l: "M0 1h15M0 4h10M0 7h15M0 10h10M0 13h15",
    c: "M0 1h15M3 4h9M0 7h15M3 10h9M0 13h15",
    r: "M0 1h15M5 4h10M0 7h15M5 10h10M0 13h15",
  }[mode];
  return (
    <svg width="15" height="14" viewBox="0 0 15 14">
      <path d={d} stroke="#1c1c20" />
    </svg>
  );
};

const BordersIcon: FC = () => (
  <svg width="16" height="16" viewBox="0 0 16 16">
    <path d="M.5.5h15v15H.5zM5.500.5v15M10.500.5v15M.5 5.500h15M.5 10.500h15" fill="#fff" stroke="#2a4a80" />
  </svg>
);

const GridLinesIcon: FC = () => (
  <svg width="16" height="16" viewBox="0 0 16 16">
    <path d="M.5.500h15v8H.5zM.5 4.500h15M5.500.5v8M10.500.5v8" fill="#dce4f0" stroke="#8a98b0" />
    <rect x="0" y="11" width="16" height="4" fill="#e3e4e6" />
  </svg>
);

const CircleDown: FC = () => (
  <svg width="14" height="14" viewBox="0 0 14 14">
    <circle cx="7" cy="7" r="6" fill="#eef0f3" stroke="#8a8e94" />
    <path d="M4 6h6L7 9.500z" fill="#4c5168" />
  </svg>
);

const DoubleLeft: FC = () => (
  <svg width="10" height="10" viewBox="0 0 10 10">
    <path d="M4.500 1L1 5l3.500 4M9 1L5.500 5 9 9" fill="none" stroke="#5a5e66" strokeWidth="1.3" />
  </svg>
);

const DoubleUp: FC = () => (
  <svg width="10" height="10" viewBox="0 0 10 10">
    <path d="M1 4.500L5 1l4 3.500M1 9l4-3.500L9 9" fill="none" stroke="#5a5e66" strokeWidth="1.3" />
  </svg>
);

const SearchGlass: FC = () => (
  <svg width="14" height="14" viewBox="0 0 14 14">
    <circle cx="8.500" cy="5.500" r="4" fill="#e2f0fb" stroke="#2a80c8" strokeWidth="1.8" />
    <path d="M5.500 8.500L1.500 12.500" stroke="#2a5a9a" strokeWidth="2.2" />
  </svg>
);

const RecordArrow: FC<{ kind: "first" | "prev" | "next" | "last" | "new" }> = ({ kind }) => {
  const color = kind === "prev" ? "#bcbfc3" : "#40444c";
  return (
    <svg width="14" height="9" viewBox="0 0 14 9">
      {kind === "first" && <path d="M2 0h1v9H2zM9 0v9L4 4.500z" fill={color} />}
      {kind === "prev" && <path d="M9 0v9L4 4.500z" fill={color} />}
      {kind === "next" && <path d="M5 0v9l5-4.500z" fill={color} />}
      {kind === "last" && <path d="M4 0v9l5-4.500zM10 0h1v9h-1z" fill={color} />}
      {kind === "new" && (
        <>
          <path d="M0 0v9l5-4.500z" fill={color} />
          <rect x="6.500" y="1.500" width="6.500" height="6.500" fill="#f6d878" stroke="#d8a830" strokeDasharray="1 1" />
        </>
      )}
    </svg>
  );
};

const CornerMark: FC = () => (
  <svg width="14" height="14" viewBox="0 0 14 14">
    <path d="M13 2v11H2z" fill="#eceef2" stroke="#d4d7dc" />
  </svg>
);

const ViewIcon: FC<{ kind: "sheet" | "pivot" | "chart" | "design" }> = ({ kind }) => (
  <svg width="14" height="13" viewBox="0 0 14 13">
    {kind === "sheet" && (
      <>
        <rect x="0.500" y="0.500" width="13" height="12" fill="#fff" stroke="#3c4048" />
        <rect x="1" y="1" width="12" height="2.500" fill="#3c4048" />
        <path d="M1 6h12M1 9h12M5 3.500v9" stroke="#5c6068" />
      </>
    )}
    {kind === "pivot" && (
      <>
        <path d="M4.500 .5h9v9h-9zM.5 4.500h4v8h8v-3" fill="#eceef0" stroke="#5c6068" />
        <path d="M4.500 5h9M9 .5v9" stroke="#5c6068" />
      </>
    )}
    {kind === "chart" && <path d="M1 12V6h3V2h4v6h5v4zM4 6v6M8 8v4" fill="#eceef0" stroke="#5c6068" />}
    {kind === "design" && (
      <>
        <path d="M1 1v11h12z" fill="none" stroke="#5c6068" strokeWidth="1.4" />
        <path d="M4 9l8-7 1 1-7 8z" fill="#6c7078" />
      </>
    )}
  </svg>
);

const WinFlag: FC = () => (
  <svg width="19" height="18" viewBox="0 0 19 18">
    <path d="M2 3c2-1 4-1 6 0l-1 6c-2-1-4-1-6 0z" fill="#e8502a" />
    <path d="M9 3c2 1 5 1 7 0l-1 6c-2 1-5 1-7 0z" fill="#7ab83c" />
    <path d="M1 10c2-1 4-1 6 0l-1 6c-2-1-4-1-6 0z" fill="#3c78d8" />
    <path d="M8 10c2 1 5 1 7 0l-1 6c-2 1-5 1-7 0z" fill="#f4c030" />
  </svg>
);

const QuickIcon: FC<{ kind: string }> = ({ kind }) => {
  switch (kind) {
    case "ie":
      return (
        <svg width="18" height="18" viewBox="0 0 18 18">
          <rect x="2" y="3" width="12" height="14" rx="1" fill="#d9ecfb" stroke="#1c5aa8" />
          <path d="M5 8h6M5 11h6M5 14h4" stroke="#2a6ab8" />
          <path d="M10 2l6 1-3 7-4-2z" fill="#2a8ae0" stroke="#fff" strokeWidth="0.6" />
        </svg>
      );
    case "firefox":
      return (
        <svg width="18" height="18" viewBox="0 0 18 18">
          <circle cx="9" cy="9" r="8" fill="#e8742a" />
          <circle cx="10" cy="8" r="5" fill="#3a5fa8" />
          <path d="M2 6c2 7 9 10 15 4-1 4-4 7-8 7-5 0-8-5-7-11z" fill="#f29a2a" />
        </svg>
      );
    case "opera":
      return (
        <svg width="18" height="18" viewBox="0 0 18 18">
          <ellipse cx="9" cy="9" rx="6.500" ry="7.500" fill="none" stroke="#e0201c" strokeWidth="3" />
        </svg>
      );
    case "filezilla":
      return (
        <svg width="18" height="18" viewBox="0 0 17 17">
          <rect width="17" height="17" fill="#a81010" />
          <text x="8.500" y="13.500" textAnchor="middle" fontFamily="Liberation Sans" fontWeight="700" fontStyle="italic" fontSize="13" fill="#fff">
            Fz
          </text>
        </svg>
      );
    case "gear":
      return (
        <svg width="18" height="18" viewBox="0 0 18 18">
          <circle cx="7" cy="7" r="5" fill="#222" stroke="#fff" strokeDasharray="2 1.500" strokeWidth="2" />
          <circle cx="12.500" cy="12" r="3.500" fill="#f2d22a" stroke="#222" strokeDasharray="1.500 1" />
        </svg>
      );
    case "folderSearch":
      return (
        <svg width="18" height="18" viewBox="0 0 18 17">
          <path d="M1 4h5l2 2h8v10H1z" fill="#f2d47a" stroke="#b08a30" />
          <circle cx="10" cy="9" r="3.500" fill="#dff0fb" stroke="#6a7a90" />
        </svg>
      );
    case "folderNet":
      return (
        <svg width="18" height="18" viewBox="0 0 18 18">
          <path d="M3 2h5l2 2h6v7H3z" fill="#f4d97e" stroke="#b08a30" />
          <path d="M9 11v4M4 16h10" stroke="#4a9a3a" strokeWidth="1.500" />
        </svg>
      );
    case "pink":
      return (
        <svg width="18" height="18" viewBox="0 0 18 18">
          <circle cx="9" cy="9" r="8" fill="#e8389c" />
          <circle cx="9" cy="9" r="5" fill="#fbe4f2" />
          <rect x="7" y="6" width="4" height="6" fill="#c81f84" />
        </svg>
      );
    default:
      return (
        <svg width="18" height="18" viewBox="0 0 18 18">
          <rect x="1" y="1" width="16" height="16" fill="none" stroke="#3fb050" strokeDasharray="1.500 1.500" />
          <path d="M2 2h5l1 2v8H2z" fill="#f2c84a" stroke="#a87a20" strokeWidth="0.6" />
          <path d="M7 8l8 8M15 8l-8 8" stroke="#f0e8d0" strokeWidth="1.600" />
        </svg>
      );
  }
};

const TrayIcon: FC<{ kind: string }> = ({ kind }) => {
  if (kind === "speaker")
    return (
      <svg width="17" height="17" viewBox="0 0 17 17">
        <ellipse cx="6" cy="7" rx="5" ry="6" fill="#5a6068" stroke="#c8ccd0" />
        <circle cx="6" cy="7" r="2" fill="#e4e6e8" />
        <path d="M10 14c2-1 3-2 4-5M8 16c3-1 6-3 7-6" stroke="#7ea6e8" fill="none" />
      </svg>
    );
  if (kind === "moon")
    return (
      <svg width="16" height="16" viewBox="0 0 16 16">
        <circle cx="9" cy="8" r="6.500" fill="#0e4ea8" />
        <circle cx="4" cy="8" r="3" fill="#1ea8a0" />
      </svg>
    );
  if (kind === "diamond")
    return (
      <svg width="16" height="16" viewBox="0 0 16 16">
        <circle cx="8" cy="8" r="7.500" fill="#c8d8f0" stroke="#26324e" />
        <path d="M8 3l5 5-5 5-5-5z" fill="#b04aa0" stroke="#2a3a70" strokeWidth="0.6" />
      </svg>
    );
  return (
    <svg width="17" height="17" viewBox="0 0 17 17">
      <path d="M8 1l7 3v6l-7 4-7-4V4z" fill="#dfe4ec" stroke="#23304e" />
      <path d="M8 7v7M1 4l7 3 7-3" stroke="#23304e" fill="none" />
      <path d="M12 9l1.300 2.600 2.700.4-2 2 .5 2.800-2.500-1.300-2.500 1.300.5-2.800-2-2 2.700-.4z" fill="#f5b81c" />
    </svg>
  );
};

/* ---------- data ---------- */

const COLUMNS = [94, 141, 116, 94, 856, 94];
const EXTRA_COLUMNS = [94, 94, 94, 94];

// the grid cuts the long field names, so the labels are what it shows
const HEADERS = [
  { label: "id_pelicula", active: true },
  { label: "titulo" },
  { label: "anoLanzamient", left: true },
  { label: "longitudMir", left: true },
  { label: "sinopsis" },
  { label: "id_compani", left: true },
];

const MOVIES: [number, string, number, number, string, number][] = [
  [18, "El gran gorila", 1949, 94, "Una joven cándida, su gorila gigante y un promotor confabulador son una sensación en un club nocturno", 10],
  [8, "El hobbit", 2012, 182, "Una aventura en otro mundo para recuperar el reino", 12],
  [11, "El origen", 2010, 162, "Dom Cobb es un ladrón con una extraña habilidad para entrar a los sueños de la gente y robarles los secretos de sus subconscientes", 3],
  [7, "Escalofrios", 2015, 103, "Zach descubre un libro que toma vida sus personajes ten cuidado", 7],
  [5, "Jurassic World", 2018, 130, "No es una historia mas de dinosaurios", 13],
  [2, "La terminal", 2004, 128, "Incapaz de entrar a los Estados Unidos, un europeo vive en aeropuerto", 2],
  [1, "Los cazafantasmas", 1984, 104, "Los fantasmas existen. Muchas veces los espíritus quedan atrapados en este mundo", 1],
  [6, "Un gran dinosaurio", 2015, 100, "Arlo termina fuera de su hogar despues de una tomenta ahora debe sobrevivir", 6],
  [12, "Un lugar en silecio", 2018, 216, "Unas criaturas que detectan el sonido han extingido la raza humana, shhhh y sobrevive", 4],
  [17, "Valkyrie", 2012, 124, "El Coronel Claus von Stauffenberg teme que Hitler pueda destruir su amada Alemania", 9],
];

const TABLES = [
  "actores", "companias", "directores", "frases", "genero", "peliculas",
  "Peliculas_actores", "Peliculas_directores", "Peliculas_generos",
  "Proyeccion_vTablaCompanias", "sysdiagrams", "usuarios", "vTablaActores",
  "vTablaCompanias", "vTablaDirectores", "vTablaFrases", "vTablaGenero",
  "vTablaPeliculas", "vTablaPeliculas_actores", "vTablaPeliculas_directores",
  "vTablaPeliculas_generos", "vTablaPeliculasxCartelera", "vTablaUsuarios",
];

const DOC_TABS = [
  { name: "actores", w: 74 },
  { name: "companias", w: 94 },
  { name: "directores", w: 87 },
  { name: "peliculas", w: 82, active: true },
];

const QUICK = ["ie", "firefox", "opera", "filezilla", "gear", "folderSearch", "folderNet", "pink", "tools"];

/* ---------- parts ---------- */

const Group: FC<{ w: number; pad?: number; label: string; launcher?: boolean; children: ReactNode }> = ({
  w,
  pad = 0,
  label,
  launcher,
  children,
}) => (
  <GroupBox $w={w}>
    <GroupBody $pad={pad}>{children}</GroupBody>
    <GroupLabel>{label}</GroupLabel>
    {launcher && (
      <Launcher>
        <DialogLauncher />
      </Launcher>
    )}
  </GroupBox>
);

const Small: FC<{ icon: ReactNode; label: string; off?: boolean; caret?: boolean }> = ({ icon, label, off, caret }) => (
  <SmallButton $off={off}>
    <SmallIcon>{icon}</SmallIcon>
    {label}
    {caret && <SmallCaret />}
  </SmallButton>
);

const FillerCells: FC = () => (
  <>
    {EXTRA_COLUMNS.map((w, i) => (
      <Cell key={i} $w={w} $bg="#fff" $faint />
    ))}
  </>
);

const App: FC = () => {
  const blankRows = Array.from({ length: 26 }, (_, i) => i);

  return (
    <Page>
      <GlobalStyle />
      <TopArea>
        <TopLeft>
          <QatRow>
            <QatSlot $w={16}>
              <AccessIcon />
            </QatSlot>
            <QatSep />
            <QatSlot $w={17}>
              <SaveIcon />
            </QatSlot>
            <QatSlot $w={24}>
              <UndoIcon />
            </QatSlot>
            <QatSlot $w={6}>
              <Caret $off />
            </QatSlot>
            <QatSlot $w={30}>
              <UndoIcon flip />
            </QatSlot>
            <QatSlot $w={6}>
              <Caret $off />
            </QatSlot>
            <QatSep />
            <QatSlot $w={8}>
              <QatMore />
            </QatSlot>
          </QatRow>
          <TabRow>
            <FileTab>Archivo</FileTab>
            <RibbonTab $w={53} $active>
              Inicio
            </RibbonTab>
            <RibbonTab $w={59}>Crear</RibbonTab>
            <RibbonTab $w={103}>Datos externos</RibbonTab>
            <RibbonTab $w={187}>Herramientas de base de datos</RibbonTab>
          </TabRow>
        </TopLeft>
        <ContextColumn>
          <ContextLabel>Herramientas de tabla</ContextLabel>
          <TabRow>
            <RibbonTab $w={67}>Campos</RibbonTab>
            <RibbonTab $w={56}>Tabla</RibbonTab>
          </TabRow>
        </ContextColumn>
        <TopRight>
          <TitleRow>
            <TitleText>BDFinal_Adrian : Base de datos (Formato de archivo de Access 2002 - 2003)  -  Microsoft Access</TitleText>
            <WindowButtons>
              <MinIcon />
              <RestoreIcon />
              <CloseIcon />
            </WindowButtons>
          </TitleRow>
          <HelpRow>
            <ChevronUp />
            <HelpIcon />
          </HelpRow>
        </TopRight>
      </TopArea>

      <Ribbon>
        <Group w={50} label="Vistas">
          <LargeButton $w={49}>
            <LargeIcon>
              <VerIcon />
            </LargeIcon>
            <div>Ver</div>
            <LargeCaret />
          </LargeButton>
        </Group>
        <Group w={155} label="Portapapeles" launcher>
          <LargeButton $w={50} $off>
            <LargeIcon>
              <PasteIcon />
            </LargeIcon>
            <div>Pegar</div>
            <LargeCaret $off />
          </LargeButton>
          <SmallColumn>
            <Small icon={<ScissorsIcon />} label="Cortar" />
            <Small icon={<CopyIcon />} label="Copiar" />
            <Small icon={<BrushIcon />} label="Copiar formato" off />
          </SmallColumn>
        </Group>
        <Group w={239} pad={4} label="Ordenar y filtrar">
          <LargeButton $w={46}>
            <LargeIcon>
              <FunnelIcon />
            </LargeIcon>
            <div>Filtro</div>
          </LargeButton>
          <SmallColumn $w={93}>
            <Small icon={<SortIcon />} label="Ascendente" />
            <Small icon={<SortIcon down />} label="Descendente" />
            <Small icon={<SortIcon off />} label="Quitar orden" off />
          </SmallColumn>
          <SmallColumn>
            <Small icon={<FilterSmall kind="bolt" />} label="Selección" caret />
            <Small icon={<FilterSmall kind="form" />} label="Avanzadas" caret />
            <Small icon={<FilterSmall kind="off" />} label="Alternar filtro" off />
          </SmallColumn>
        </Group>
        <Group w={270} pad={4} label="Registros">
          <LargeButton $w={59}>
            <LargeIcon $h={38}>
              <RefreshIcon />
            </LargeIcon>
            <div>Actualizar</div>
            <div>
              todo <Caret />
            </div>
          </LargeButton>
          <SmallColumn $w={77}>
            <Small icon={<NewRecordIcon />} label="Nuevo" />
            <Small icon={<NewRecordIcon save />} label="Guardar" />
            <Small icon={<DeleteIcon />} label="Eliminar" caret />
          </SmallColumn>
          <SmallColumn>
            <Small icon={<SigmaGlyph>Σ</SigmaGlyph>} label="Totales" />
            <Small icon={<SpellIcon />} label="Revisión ortográfica" />
            <Small icon={<MoreGrid />} label="Más" caret />
          </SmallColumn>
        </Group>
        <Group w={144} pad={4} label="Buscar">
          <LargeButton $w={47}>
            <LargeIcon>
              <Binoculars />
            </LargeIcon>
            <div>Buscar</div>
          </LargeButton>
          <SmallColumn>
            <Small icon={<ReplaceIcon />} label="Reemplazar" />
            <Small icon={<GotoIcon />} label="Ir a" caret />
            <Small icon={<PointerIcon />} label="Seleccionar" caret />
          </SmallColumn>
        </Group>
        <GroupBox $w={352}>
          <FormatBody>
            <FormatRow $gap={7}>
              <Combo $w={140}>
                Calibri <Caret />
              </Combo>
              <Combo $w={54}>
                11 <Caret />
              </Combo>
              <FormatSlot $w={27}>
                <ListIcon />
              </FormatSlot>
              <FormatSlot $w={21}>
                <ListIcon numbered />
              </FormatSlot>
              <FormatSep $l={4} $r={5} />
              <FormatSlot $w={23}>
                <IndentIcon out />
              </FormatSlot>
              <FormatSlot $w={23}>
                <IndentIcon />
              </FormatSlot>
              <FormatSep $l={2} $r={8} />
              <FormatSlot $w={18}>
                <ParagraphIcon />
              </FormatSlot>
              <FormatSlot $w={11}>
                <Caret $off />
              </FormatSlot>
            </FormatRow>
            <FormatRow>
              <FormatSlot $w={24}>
                <BoldLetter>N</BoldLetter>
              </FormatSlot>
              <FormatSlot $w={22}>
                <BoldLetter $italic>K</BoldLetter>
              </FormatSlot>
              <FormatSlot $w={23}>
                <BoldLetter $under>S</BoldLetter>
              </FormatSlot>
              <FormatSep $l={4} $r={8} />
              <FormatSlot $w={17}>
                <FontColorIcon />
              </FormatSlot>
              <FormatSlot $w={14}>
                <Caret />
              </FormatSlot>
              <FormatSlot $w={22}>
                <HighlightIcon />
              </FormatSlot>
              <FormatSlot $w={13}>
                <Caret $off />
              </FormatSlot>
              <FormatSlot $w={20}>
                <FillIcon />
              </FormatSlot>
              <FormatSlot $w={13}>
                <Caret />
              </FormatSlot>
              <FormatSep $l={3} $r={6} />
              <FormatSlot $w={23}>
                <AlignIcon mode="l" />
              </FormatSlot>
              <FormatSlot $w={23}>
                <AlignIcon mode="c" />
              </FormatSlot>
              <FormatSlot $w={23}>
                <AlignIcon mode="r" />
              </FormatSlot>
              <FormatSep $l={4} $r={8} />
              <FormatSlot $w={17}>
                <BordersIcon />
              </FormatSlot>
              <FormatSlot $w={10}>
                <Caret />
              </FormatSlot>
              <FormatSep $l={5} $r={8} />
              <FormatSlot $w={17}>
                <GridLinesIcon />
              </FormatSlot>
              <FormatSlot $w={16}>
                <Caret />
              </FormatSlot>
            </FormatRow>
          </FormatBody>
          <GroupLabel>Formato de texto</GroupLabel>
          <Launcher>
            <DialogLauncher />
          </Launcher>
        </GroupBox>
      </Ribbon>

      <Workspace>
        <NavPane>
          <NavHeader>
            <NavTitle>Todos los objetos de Acc...</NavTitle>
            <CircleDown />
            <NavSep />
            <DoubleLeft />
          </NavHeader>
          <NavSearch>
            <NavInput>Buscar...</NavInput>
            <NavSearchIcon>
              <SearchGlass />
            </NavSearchIcon>
          </NavSearch>
          <NavGroup>
            Tablas
            <DoubleUp />
          </NavGroup>
          <NavList>
            {TABLES.map((name) => (
              <NavItem key={name} $active={name === "peliculas"}>
                <TableIcon />
                {name}
              </NavItem>
            ))}
          </NavList>
        </NavPane>
        <Gutter />
        <DocArea>
          <DocTabs>
            {DOC_TABS.map((tab) => (
              <DocTab key={tab.name} $w={tab.w} $active={tab.active}>
                <TableIcon />
                {tab.name}
              </DocTab>
            ))}
            <DocClose>
              <CloseIcon s={9} thin />
            </DocClose>
          </DocTabs>
          <GridBody>
            <GridRow>
              <Selector $state="blank">
                <CornerMark />
              </Selector>
              {HEADERS.map((h, i) => (
                <HeaderCell key={h.label} $w={COLUMNS[i]} $active={h.active}>
                  <HeaderLabel $left={h.left}>{h.label}</HeaderLabel>
                  <HeaderCaret />
                </HeaderCell>
              ))}
              {EXTRA_COLUMNS.map((w, i) => (
                <HeaderCell key={i} $w={w} $blank />
              ))}
            </GridRow>
            {MOVIES.map((movie, r) => {
              const bg = r === 0 ? "#b5c9e7" : r % 2 === 1 ? "#f2f2f2" : "#fff";
              return (
                <GridRow key={movie[0]}>
                  <Selector $state={r === 0 ? "current" : "plain"} />
                  {r === 0 ? (
                    <CurrentCell $w={COLUMNS[0]} $num $bg="#fff">
                      <Inverted>{movie[0]}</Inverted>
                    </CurrentCell>
                  ) : (
                    <Cell $w={COLUMNS[0]} $num $bg={bg}>
                      {movie[0]}
                    </Cell>
                  )}
                  <Cell $w={COLUMNS[1]} $bg={bg}>
                    {movie[1]}
                  </Cell>
                  <Cell $w={COLUMNS[2]} $num $bg={bg}>
                    {movie[2]}
                  </Cell>
                  <Cell $w={COLUMNS[3]} $num $bg={bg}>
                    {movie[3]}
                  </Cell>
                  <Cell $w={COLUMNS[4]} $bg={bg}>
                    {movie[4]}
                  </Cell>
                  <Cell $w={COLUMNS[5]} $num $bg={bg}>
                    {movie[5]}
                  </Cell>
                  <FillerCells />
                </GridRow>
              );
            })}
            <GridRow>
              <Selector $state="plain">*</Selector>
              {COLUMNS.map((w, i) => (
                <Cell key={i} $w={w} $bg="#fff" />
              ))}
              <FillerCells />
            </GridRow>
            {blankRows.map((r) => (
              <GridRow key={r}>
                <Selector $state="blank" />
                {COLUMNS.map((w, i) => (
                  <Cell key={i} $w={w} $bg="#fff" $faint />
                ))}
                <FillerCells />
              </GridRow>
            ))}
          </GridBody>
          <RecordBar>
            <RecordLabel>Registro:</RecordLabel>
            <RecordGlyph $w={18}>
              <RecordArrow kind="first" />
            </RecordGlyph>
            <RecordGlyph $w={17}>
              <RecordArrow kind="prev" />
            </RecordGlyph>
            <RecordInput $w={50}>1 de 10</RecordInput>
            <RecordGlyph $w={18}>
              <RecordArrow kind="next" />
            </RecordGlyph>
            <RecordGlyph $w={18}>
              <RecordArrow kind="last" />
            </RecordGlyph>
            <RecordGlyph $w={18}>
              <RecordArrow kind="new" />
            </RecordGlyph>
            <RecordSep $l={2} $r={7} />
            <SmallIcon>
              <FilterSmall kind="clear" />
            </SmallIcon>
            <RecordOff>Sin filtro</RecordOff>
            <RecordSep $l={8} $r={5} />
            <RecordInput $w={70}>Buscar</RecordInput>
          </RecordBar>
        </DocArea>
      </Workspace>

      <StatusBar>
        <StatusText $w={949}>Vista Hoja de datos</StatusText>
        <StatusSep />
        <StatusKey>Bloq Num</StatusKey>
        <StatusSep />
        <ViewGroup>
          <ViewButton $active>
            <ViewIcon kind="sheet" />
          </ViewButton>
          <ViewButton>
            <ViewIcon kind="pivot" />
          </ViewButton>
          <ViewButton>
            <ViewIcon kind="chart" />
          </ViewButton>
          <ViewButton>
            <ViewIcon kind="design" />
          </ViewButton>
        </ViewGroup>
      </StatusBar>

      <Taskbar>
        <StartButton>
          <WinFlag />
          Inicio
        </StartButton>
        <Grip $l={10} $r={9} />
        <QuickIcons>
          {QUICK.map((kind) => (
            <QuickIcon key={kind} kind={kind} />
          ))}
        </QuickIcons>
        <Grip $l={4} $r={5} />
        <TaskButton>
          <QuickIcon kind="tools" />
          Microsoft SQL Server ...
        </TaskButton>
        <TaskButton>
          <QuickIcon kind="folderSearch" />
          C:\BaseDatosCINE_A...
        </TaskButton>
        <TaskButton $active>
          <AccessIcon s={15} />
          Microsoft Access - BD...
        </TaskButton>
        <TaskSpacer />
        <Grip $l={0} $r={8} />
        <Language>ES</Language>
        <Tray>
          <TrayIcon kind="speaker" />
          <TrayIcon kind="moon" />
          <TrayIcon kind="diamond" />
          <TrayIcon kind="box" />
          <Clock>10:13 p.m.</Clock>
        </Tray>
      </Taskbar>
    </Page>
  );
};

export default App;
